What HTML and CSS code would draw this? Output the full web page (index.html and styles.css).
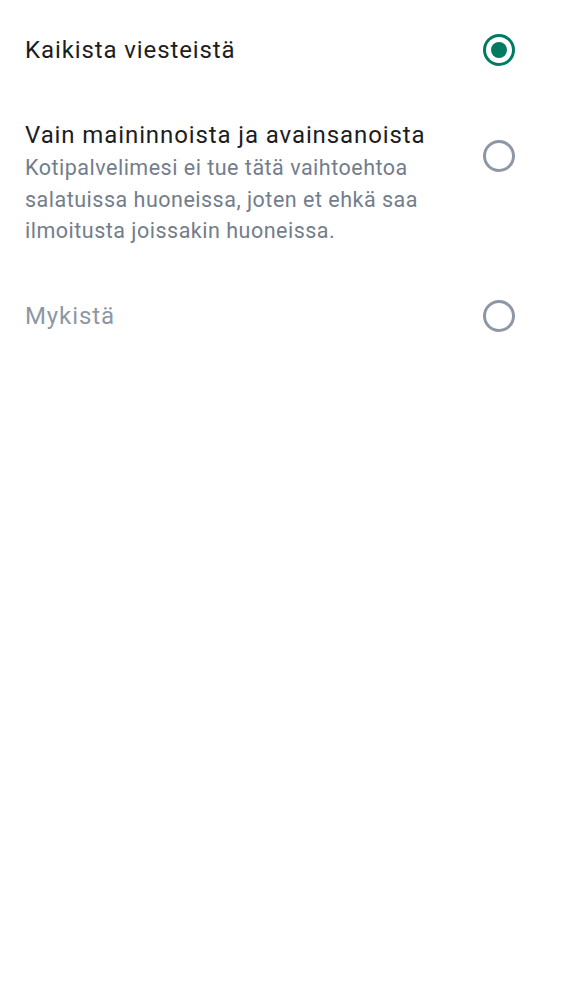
FILE: index.html
```html
<!DOCTYPE html>
<html>
<head>
<meta charset="utf-8">
<link rel="stylesheet" href="styles.css">
</head>
<body>
<div class="list">
  <div class="row row-first">
    <div class="text"><div class="title">Kaikista viesteistä</div></div>
    <div class="radio checked"><span class="dot"></span></div>
  </div>
  <div class="row row-second">
    <div class="text">
      <div class="title">Vain maininnoista ja avainsanoista</div>
      <div class="subtitle">Kotipalvelimesi ei tue tätä vaihtoehtoa salatuissa huoneissa, joten et ehkä saa ilmoitusta joissakin huoneissa.</div>
    </div>
    <div class="radio top"></div>
  </div>
  <div class="row row-third">
    <div class="text"><div class="title muted">Mykistä</div></div>
    <div class="radio"></div>
  </div>
</div>
</body>
</html>
```

FILE: styles.css
```css
html, body {
  margin: 0;
  padding: 0;
  background: #ffffff;
}
body {
  font-family: Roboto, "Noto Sans", sans-serif;
  width: 562px;
  height: 1000px;
}
.list {
  display: flex;
  flex-direction: column;
}
.row {
  display: flex;
  align-items: center;
  padding-left: 25px;
  padding-right: 47px;
  gap: 20px;
}
.row-first {
  height: 100px;
}
.row-second {
  align-items: flex-start;
  padding-top: 19px;
  padding-bottom: 9px;
}
.row-third {
  height: 120px;
}
.text {
  flex: 1;
  min-width: 0;
}
.title {
  font-size: 24px;
  line-height: 32px;
  color: #1b1d22;
  letter-spacing: 0.9px;
}
.title.muted {
  color: #8d97a5;
}
.subtitle {
  margin-top: 1px;
  font-size: 21.5px;
  line-height: 31.5px;
  color: #737d8c;
  letter-spacing: 0.5px;
  padding-right: 10px;
}
.radio {
  width: 26px;
  height: 26px;
  border: 3px solid #8d97a5;
  border-radius: 50%;
  display: flex;
  align-items: center;
  justify-content: center;
  flex-shrink: 0;
}
.radio.top {
  margin-top: 21px;
}
.radio.checked {
  border-color: #007a61;
}
.dot {
  width: 16px;
  height: 16px;
  border-radius: 50%;
  background: #007a61;
}
```
